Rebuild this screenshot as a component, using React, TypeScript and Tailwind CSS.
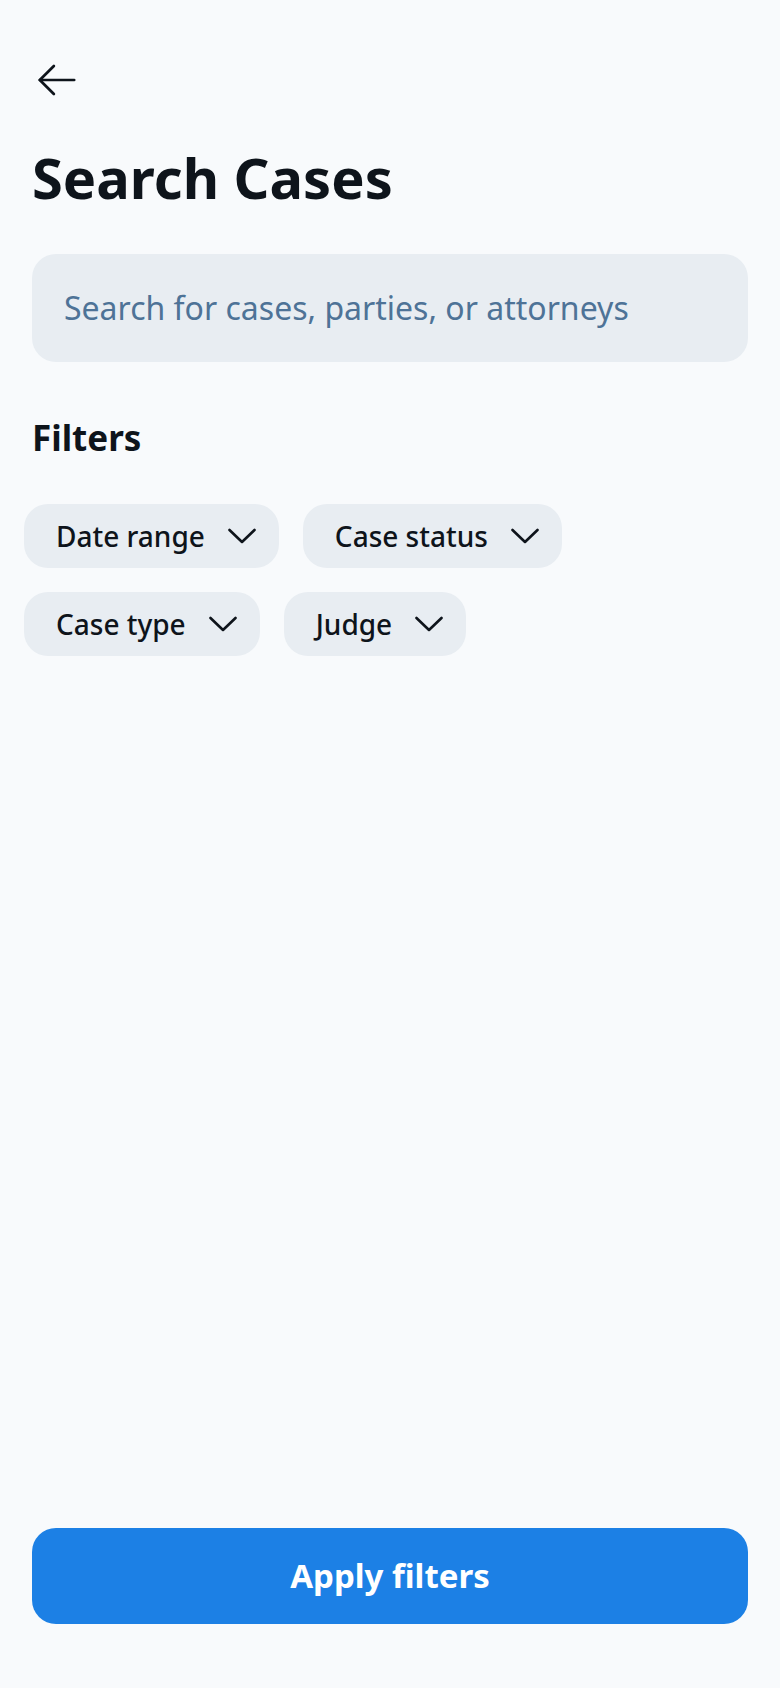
import React from 'react';

const filters = ['Date range', 'Case status', 'Case type', 'Judge'];

const Caret = () => (
  <svg width="28" height="16" viewBox="0 0 28 16" fill="none" className="shrink-0">
    <polyline points="1.5,2 14,14 26.5,2" stroke="#0e141b" strokeWidth="2.6" strokeLinecap="round" strokeLinejoin="round" />
  </svg>
);

const App: React.FC = () => {
  return (
    <div className="min-h-screen flex flex-col bg-[#f8fafc] text-[#0e141b] font-['Noto_Sans',sans-serif]">
      {/* Header */}
      <div className="px-[32px] pt-[55px]">
        <svg width="50" height="50" viewBox="0 0 256 256" fill="none">
          <line x1="216" y1="128" x2="40" y2="128" stroke="#0e141b" strokeWidth="14" strokeLinecap="round" />
          <polyline points="112,56 40,128 112,200" stroke="#0e141b" strokeWidth="14" strokeLinecap="round" strokeLinejoin="round" />
        </svg>
      </div>

      <h1 className="px-[32px] mt-[40px] text-[56px] leading-[64px] font-bold">Search Cases</h1>

      {/* Search */}
      <div className="px-[32px] mt-[45px]">
        <div className="h-[108px] rounded-[24px] bg-[#e8edf2] flex items-center px-[32px]">
          <span className="text-[32px] text-[#4e7397]">Search for cases, parties, or attorneys</span>
        </div>
      </div>

      {/* Filters */}
      <h2 className="px-[32px] mt-[54px] text-[35px] leading-[44px] font-bold">Filters</h2>

      <div className="px-[24px] mt-[44px] flex flex-wrap gap-[24px] max-w-[600px]">
        {filters.map((f) => (
          <div key={f} className="h-[64px] rounded-[24px] bg-[#e8edf2] flex items-center gap-[23px] pl-[32px] pr-[23px]">
            <span className="text-[28px] font-medium">{f}</span>
            <Caret />
          </div>
        ))}
      </div>

      <div className="flex-1" />

      {/* Button */}
      <div className="px-[32px] pb-[64px]">
        <button className="w-full h-[96px] rounded-[24px] bg-[#1c80e5] text-white text-[33px] font-bold">
          Apply filters
        </button>
      </div>
    </div>
  );
};

export default App;
